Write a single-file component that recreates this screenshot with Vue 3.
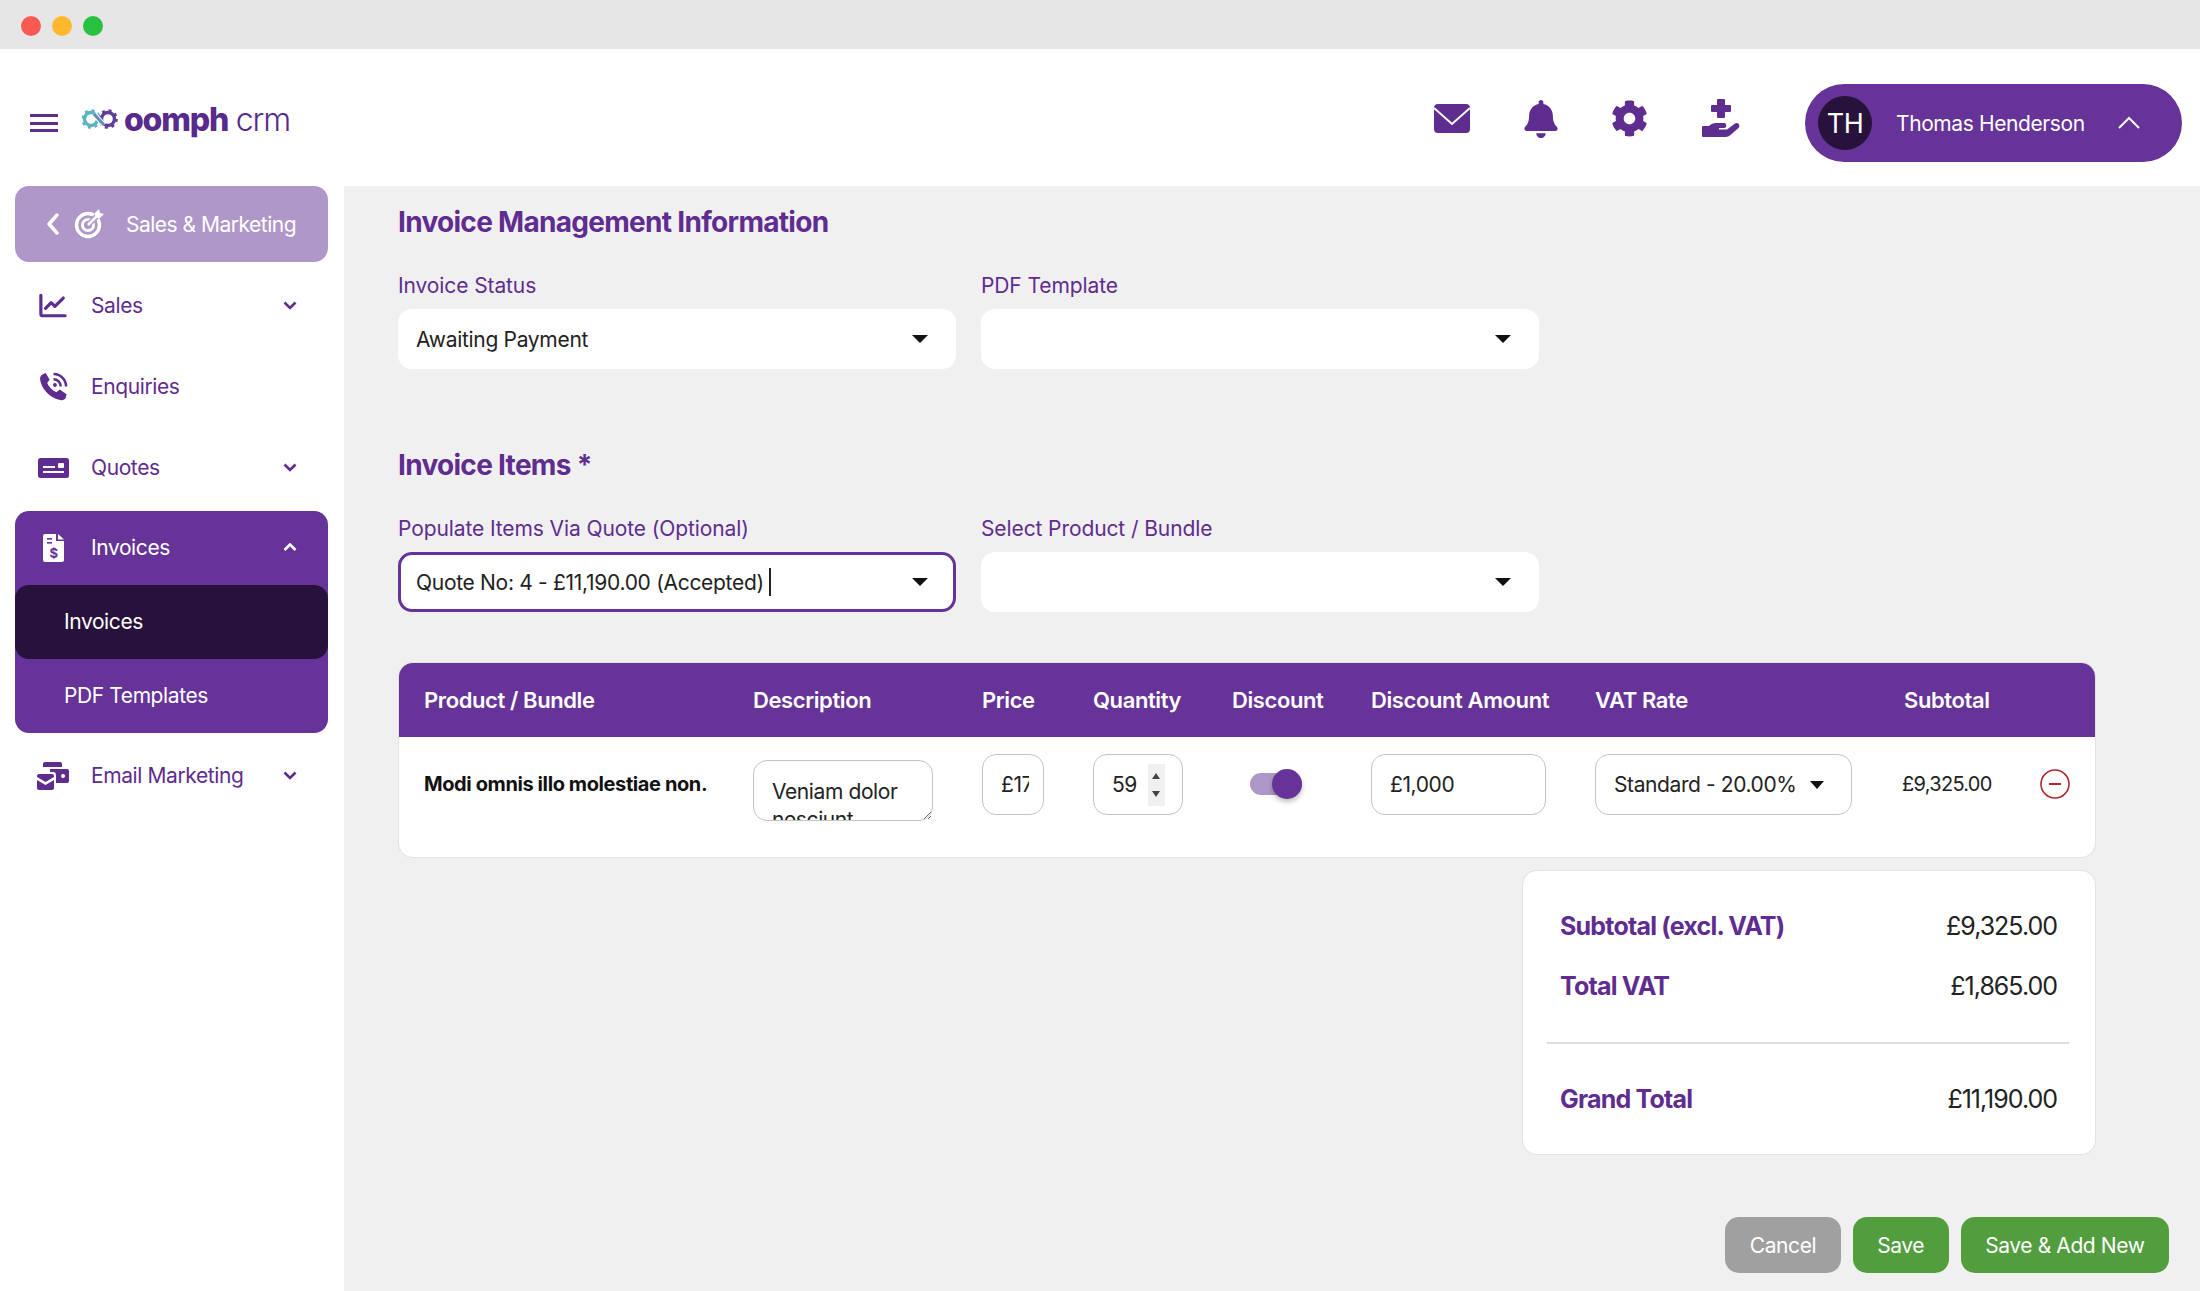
<template>
  <div class="window">
    <div class="titlebar">
      <span class="dot red"></span>
      <span class="dot yellow"></span>
      <span class="dot green"></span>
    </div>

    <header class="topbar">
      <div class="brand">
        <div class="burger"><i></i><i></i><i></i></div>
        <svg class="logo-mark" viewBox="0 0 36 22" width="36" height="22">
          <circle cx="9" cy="11" r="6.5" fill="none" stroke="#5bb4bf" stroke-width="3.4" />
          <circle cx="9" cy="11" r="8.6" fill="none" stroke="#5bb4bf" stroke-width="2.4" stroke-dasharray="3 3.8" />
          <circle cx="26" cy="11" r="6.5" fill="none" stroke="#5f3d9a" stroke-width="3.4" />
          <circle cx="26" cy="11" r="8.6" fill="none" stroke="#5f3d9a" stroke-width="2.4" stroke-dasharray="3 3.8" />
          <path d="M12 6 L22 17" stroke="#fff" stroke-width="5" />
          <path d="M12 6 L22 17" stroke="#5b8fb0" stroke-width="3" />
        </svg>
        <span class="logo-text"><b>oomph</b> <span>crm</span></span>
      </div>

      <div class="top-actions">
        <svg class="top-icon" viewBox="0 0 36 29" width="36" height="29">
          <rect x="0" y="0" width="36" height="29" rx="4" fill="#5f2c90" />
          <path d="M0 4 L18 20 L36 4" fill="none" stroke="#fff" stroke-width="2" />
        </svg>
        <svg class="top-icon" viewBox="0 0 448 512" width="34" height="38">
          <path fill="#5f2c90" d="M224 512c35.32 0 63.97-28.65 63.97-64H160.03c0 35.35 28.65 64 63.97 64zm215.39-149.71c-19.32-20.76-55.47-51.99-55.47-154.29 0-77.7-54.48-139.9-127.94-155.16V32c0-17.67-14.32-32-31.98-32s-31.98 14.33-31.98 32v20.84C118.56 68.1 64.08 130.3 64.08 208c0 102.3-36.15 133.53-55.47 154.29-6 6.45-8.66 14.16-8.61 21.71.11 16.4 12.98 32 32.1 32h383.8c19.12 0 32-15.6 32.1-32 .05-7.55-2.61-15.27-8.61-21.71z" />
        </svg>
        <svg class="top-icon" viewBox="0 0 512 512" width="37" height="37">
          <path fill="#5f2c90" d="M487.4 315.7l-42.6-24.6c4.3-23.2 4.3-47 0-70.2l42.6-24.6c4.9-2.8 7.1-8.6 5.5-14-11.1-35.6-30-67.8-54.7-94.6-3.8-4.1-10-5.1-14.8-2.3L380.8 110c-17.9-15.4-38.5-27.3-60.8-35.1V25.8c0-5.6-3.9-10.5-9.4-11.7-36.7-8.2-74.3-7.8-109.2 0-5.5 1.2-9.4 6.1-9.4 11.7V75c-22.2 7.9-42.8 19.8-60.8 35.1L88.7 85.5c-4.9-2.8-11-1.9-14.8 2.3-24.7 26.7-43.6 58.9-54.7 94.6-1.7 5.4.6 11.2 5.5 14L67.3 221c-4.3 23.2-4.3 47 0 70.2l-42.6 24.6c-4.9 2.8-7.1 8.6-5.5 14 11.1 35.6 30 67.8 54.7 94.6 3.8 4.1 10 5.1 14.8 2.3l42.6-24.6c17.9 15.4 38.5 27.3 60.8 35.1v49.2c0 5.6 3.9 10.5 9.4 11.7 36.7 8.2 74.3 7.8 109.2 0 5.5-1.2 9.4-6.1 9.4-11.7v-49.2c22.2-7.9 42.8-19.8 60.8-35.1l42.6 24.6c4.9 2.8 11 1.9 14.8-2.3 24.7-26.7 43.6-58.9 54.7-94.6 1.5-5.5-.7-11.3-5.6-14.1zM256 336c-44.1 0-80-35.9-80-80s35.9-80 80-80 80 35.9 80 80-35.9 80-80 80z" />
        </svg>
        <svg class="top-icon" viewBox="0 0 42 40" width="42" height="40">
          <path fill="#5f2c90" d="M16 0h6a1 1 0 0 1 1 1v5h5a1 1 0 0 1 1 1v5a1 1 0 0 1-1 1h-5v5a1 1 0 0 1-1 1h-6a1 1 0 0 1-1-1v-5h-5a1 1 0 0 1-1-1V7a1 1 0 0 1 1-1h5V1a1 1 0 0 1 1-1z" />
          <path fill="#5f2c90" d="M1 27h6c2-2 4-3 7-3h8c3 0 3 5 0 5h-5v1.5h8l8-6c3-2 6 2 3.500 4.500l-8 7c-1.500 1.300-3 2-5 2H1a1 1 0 0 1-1-1v-9a1 1 0 0 1 1-1z" />
        </svg>
      </div>

      <div class="profile">
        <span class="avatar">TH</span>
        <span class="profile-name">Thomas Henderson</span>
        <svg viewBox="0 0 24 14" width="24" height="14">
          <path d="M2 12 L12 2 L22 12" fill="none" stroke="#fff" stroke-width="2" />
        </svg>
      </div>
    </header>

    <div class="body">
      <aside class="sidebar">
        <div class="back">
          <svg viewBox="0 0 14 22" width="14" height="22">
            <path d="M11 2 L3 11 L11 20" fill="none" stroke="#fff" stroke-width="3.4" stroke-linecap="round" stroke-linejoin="round" />
          </svg>
          <svg class="target" viewBox="0 0 30 30" width="30" height="30">
            <circle cx="14" cy="16" r="11.500" fill="none" stroke="#fff" stroke-width="3.400" />
            <circle cx="14" cy="16" r="5.500" fill="none" stroke="#fff" stroke-width="3" />
            <path d="M14 16 L26 4" stroke="#b097c9" stroke-width="5.500" />
            <path d="M14 16 L25 5" stroke="#fff" stroke-width="2.600" />
            <path d="M21 4 L25 0 L26 4 L30 5 L26 9 L21 9z" fill="#fff" />
          </svg>
          <span>Sales &amp; Marketing</span>
        </div>

        <div class="nav-row">
          <span class="nav-icon">
            <svg viewBox="0 0 30 26" width="28" height="25">
              <path d="M2 2 V22 a2 2 0 0 0 2 2 H28" fill="none" stroke="#5f2c90" stroke-width="3.400" stroke-linecap="round" />
              <path d="M7 16 L13 10 L17 14 L26 5" fill="none" stroke="#5f2c90" stroke-width="3.400" stroke-linecap="round" stroke-linejoin="round" />
            </svg>
          </span>
          <span class="nav-label">Sales</span>
          <svg class="chev" viewBox="0 0 14 9" width="14" height="9"><path d="M1.500 1.500 L7 7 L12.500 1.500" /></svg>
        </div>

        <div class="nav-row">
          <span class="nav-icon">
            <svg viewBox="0 0 30 30" width="29" height="29">
              <path fill="#5f2c90" d="M7 1 L11 8 L8.500 11.500 C10 15.500 13.500 19 18 21 L21.500 18 L28.500 23 L27.500 27 C26.500 29 24.500 29.500 22 29 C11 27 2 17 1 7 C1 4.500 3 2 7 1z" />
              <path d="M15 7.500 A7.500 7.500 0 0 1 22.500 15 M15 2 A13 13 0 0 1 28 15" fill="none" stroke="#5f2c90" stroke-width="2.600" />
              <circle cx="16.500" cy="13.500" r="2" fill="#5f2c90" />
            </svg>
          </span>
          <span class="nav-label">Enquiries</span>
        </div>

        <div class="nav-row">
          <span class="nav-icon">
            <svg viewBox="0 0 31 20" width="31" height="20">
              <rect width="31" height="20" rx="2.500" fill="#5f2c90" />
              <rect x="5" y="8" width="12" height="2" fill="#fff" />
              <rect x="5" y="13" width="21" height="2" fill="#fff" />
              <rect x="20" y="5" width="6" height="5" rx="1" fill="#fff" />
            </svg>
          </span>
          <span class="nav-label">Quotes</span>
          <svg class="chev" viewBox="0 0 14 9" width="14" height="9"><path d="M1.500 1.500 L7 7 L12.500 1.500" /></svg>
        </div>

        <div class="nav-group">
          <div class="nav-row open">
            <span class="nav-icon">
              <svg viewBox="0 0 21 28" width="21" height="28">
                <path fill="#fff" d="M2 0 H13 V7 H21 V26 a2 2 0 0 1-2 2 H2 a2 2 0 0 1-2-2 V2 a2 2 0 0 1 2-2z M15 0 L21 5.500 H15z" />
                <rect x="4" y="4" width="5" height="1.600" fill="#663399" />
                <rect x="4" y="8" width="5" height="1.600" fill="#663399" />
                <text x="10.500" y="24" text-anchor="middle" font-size="13" font-weight="700" font-family="Inter, sans-serif" fill="#663399">$</text>
              </svg>
            </span>
            <span class="nav-label">Invoices</span>
            <svg class="chev" viewBox="0 0 14 9" width="14" height="9"><path d="M1.500 7 L7 1.500 L12.500 7" /></svg>
          </div>
          <div class="sub-row active">Invoices</div>
          <div class="sub-row">PDF Templates</div>
        </div>

        <div class="nav-row">
          <span class="nav-icon">
            <svg viewBox="0 0 32 28" width="32" height="28">
              <path fill="#5f2c90" d="M6 2 a2 2 0 0 1 2-2 H23 a2 2 0 0 1 2 2 V5 H6z" />
              <path fill="#5f2c90" d="M13 7 H30 a2 2 0 0 1 2 2 V19 a2 2 0 0 1-2 2 H19 V13 a3 3 0 0 0-3-3 H13z" />
              <circle cx="26" cy="14" r="2" fill="#fff" />
              <path fill="#5f2c90" d="M0 14 a2 2 0 0 1 2-2 H15 a2 2 0 0 1 2 2 V15 L8.500 20 L0 15z M0 18 L8.500 23 L17 18 V26 a2 2 0 0 1-2 2 H2 a2 2 0 0 1-2-2z" />
            </svg>
          </span>
          <span class="nav-label">Email Marketing</span>
          <svg class="chev" viewBox="0 0 14 9" width="14" height="9"><path d="M1.500 1.500 L7 7 L12.500 1.500" /></svg>
        </div>
      </aside>

      <main class="content">
        <h2 class="section-title first">Invoice Management Information</h2>
        <div class="field-row">
          <div class="field">
            <label>Invoice Status</label>
            <div class="select">Awaiting Payment<i class="caret"></i></div>
          </div>
          <div class="field">
            <label>PDF Template</label>
            <div class="select"><i class="caret"></i></div>
          </div>
        </div>

        <h2 class="section-title second">Invoice Items *</h2>
        <div class="field-row">
          <div class="field">
            <label>Populate Items Via Quote (Optional)</label>
            <div class="select focused">Quote No: 4 - £11,190.00 (Accepted)<span class="text-cursor"></span><i class="caret"></i></div>
          </div>
          <div class="field">
            <label>Select Product / Bundle</label>
            <div class="select"><i class="caret"></i></div>
          </div>
        </div>

        <section class="items">
          <div class="items-head">
            <span v-for="col in columns" :key="col">{{ col }}</span>
          </div>
          <div class="items-row">
            <strong class="product">Modi omnis illo molestiae non.</strong>
            <textarea class="box desc" readonly>Veniam dolor nesciunt</textarea>
            <input class="box price" readonly value="£175.00" />
            <div class="box qty">
              59
              <span class="spin"><i class="up"></i><i class="down"></i></span>
            </div>
            <span class="toggle"><i></i></span>
            <input class="box amount" readonly value="£1,000" />
            <div class="box vat">Standard - 20.00%<i class="caret small"></i></div>
            <span class="subtotal">£9,325.00</span>
            <svg class="remove" viewBox="0 0 30 30" width="30" height="30">
              <circle cx="15" cy="15" r="14" fill="none" stroke="#b3262e" stroke-width="1.600" />
              <path d="M9 15 H21" stroke="#b3262e" stroke-width="2.200" />
            </svg>
          </div>
        </section>

        <div class="totals-wrap">
          <section class="totals">
            <div class="total-line"><b>Subtotal (excl. VAT)</b><span>£9,325.00</span></div>
            <div class="total-line"><b>Total VAT</b><span>£1,865.00</span></div>
            <hr />
            <div class="total-line"><b>Grand Total</b><span>£11,190.00</span></div>
          </section>
        </div>

        <div class="actions">
          <button class="btn grey">Cancel</button>
          <button class="btn">Save</button>
          <button class="btn">Save &amp; Add New</button>
        </div>
      </main>
    </div>
  </div>
</template>

<script setup>
const columns = ['Product / Bundle', 'Description', 'Price', 'Quantity', 'Discount', 'Discount Amount', 'VAT Rate', 'Subtotal']
</script>

<style>
html, body { margin: 0; background: #fff; }
</style>

<style scoped>
.window {
  width: 2200px;
  height: 1291px;
  overflow: hidden;
  display: flex;
  flex-direction: column;
  font-family: Inter, "Liberation Sans", sans-serif;
  letter-spacing: -0.4px;
  color: #222;
}

.titlebar {
  height: 49px;
  flex: none;
  background: #e6e6e6;
  display: flex;
  align-items: center;
  gap: 11px;
  padding: 3px 0 0 21px;
  box-sizing: border-box;
}
.dot { width: 20px; height: 20px; border-radius: 50%; }
.red { background: #fb5a52; }
.yellow { background: #fdb82e; }
.green { background: #27c13f; }

.topbar {
  height: 137px;
  flex: none;
  display: flex;
  align-items: center;
  background: #fff;
}
.brand { display: flex; align-items: center; width: 1400px; padding-left: 30px; box-sizing: border-box; margin-top: 10px; }
.burger { width: 28px; margin-right: 24px; margin-top: 6px; }
.burger i { display: block; height: 3px; background: #5f2c90; margin-bottom: 4.500px; }
.logo-mark { margin: -7px 6px 0 0; }
.logo-text { font-size: 32px; color: #572a8c; letter-spacing: -1.2px; margin-top: -7px; }
.logo-text b { font-weight: 800; }
.logo-text span { font-weight: 300; }

.top-actions { display: flex; align-items: center; width: 405px; padding-left: 34px; box-sizing: border-box; gap: 53.500px; margin-top: 2px; }
.profile {
  width: 377px;
  height: 78px;
  margin-top: 11px;
  border-radius: 39px;
  background: #663399;
  color: #fff;
  display: flex;
  align-items: center;
  box-sizing: border-box;
  padding-left: 13px;
}
.avatar {
  width: 54px;
  height: 54px;
  border-radius: 50%;
  background: #26123a;
  font-size: 27px;
  display: flex;
  align-items: center;
  justify-content: center;
  margin-right: 24px;
}
.profile-name { font-size: 21px; width: 221px; }

.body { flex: 1; display: flex; min-height: 0; }

.sidebar { width: 344px; flex: none; padding: 0 16px 0 15px; box-sizing: border-box; background: #fff; }
.back {
  height: 76px;
  border-radius: 14px;
  background: #b097c9;
  color: #fff;
  display: flex;
  align-items: center;
  padding-left: 31px;
  font-size: 21px;
  letter-spacing: -0.5px;
  margin-bottom: 3px;
}
.back .target { margin: 0 22px 0 14px; }
.nav-row {
  height: 81px;
  display: flex;
  align-items: center;
  color: #5f2c90;
  font-size: 21px;
  position: relative;
}
.nav-icon { width: 76px; display: flex; justify-content: center; flex: none; }
.chev { position: absolute; left: 268px; fill: none; stroke: #5f2c90; stroke-width: 2.600; }
.nav-group { margin: 2.500px 0; background: #663399; border-radius: 14px; overflow: hidden; }
.nav-row.open { height: 74px; color: #fff; }
.nav-row.open .chev { stroke: #fff; }
.sub-row { height: 74px; display: flex; align-items: center; padding-left: 49px; color: #fff; font-size: 21px; }
.sub-row.active { background: #26123a; border-radius: 14px; }

.content { flex: 1; background: #f0f0f0; padding-left: 54px; box-sizing: border-box; }
.section-title { margin: 0; font-size: 28px; line-height: 36px; font-weight: 700; color: #5f2c90; letter-spacing: -0.7px; }
.section-title.first { margin-top: 18px; }
.section-title.second { margin-top: 78px; }
.field-row { display: flex; gap: 25px; margin-top: 33px; }
.field { width: 558px; }
.field label { display: block; color: #5f2c90; font-size: 21px; line-height: 26px; margin-bottom: 10px; letter-spacing: -0.1px; }
.select {
  height: 60px;
  background: #fff;
  border-radius: 14px;
  box-sizing: border-box;
  display: flex;
  align-items: center;
  padding: 0 28px 0 18px;
  font-size: 21px;
  letter-spacing: -0.3px;
  color: #222;
  position: relative;
}
.select.focused { border: 3px solid #663399; padding: 0 25px 0 15px; }
.text-cursor { display: inline-block; width: 2px; height: 28px; background: #222; margin-left: 5px; }
.caret {
  margin-left: auto;
  width: 0;
  height: 0;
  border-left: 8px solid transparent;
  border-right: 8px solid transparent;
  border-top: 8px solid #111;
}

.items {
  width: 1696px;
  margin: 51px 0 0 1px;
  height: 194px;
  background: #fff;
  border-radius: 14px;
  box-shadow: 0 0 0 1px #e2e2e2;
  overflow: hidden;
}
.items-head, .items-row {
  display: grid;
  grid-template-columns: 329px 229px 111px 139px 139px 224px 309px 136px 1fr;
  padding-left: 25px;
}
.items-head {
  height: 74px;
  align-items: center;
  background: #663399;
  color: #fff;
  font-size: 22px;
  font-weight: 600;
  letter-spacing: -0.4px;
}
.items-row { padding-top: 17px; align-items: start; color: #222; }
.product { color: #111; font-size: 20px; font-weight: 700; line-height: 61px; }
.box {
  height: 61px;
  border: 1.500px solid #c4c4c4;
  border-radius: 14px;
  box-sizing: border-box;
  background: #fff;
  font-family: inherit;
  font-size: 21px;
  letter-spacing: -0.4px;
  color: #222;
  outline: none;
  padding: 0 18px;
  display: flex;
  align-items: center;
}
.desc { width: 180px; margin-top: 6px; padding: 17px 18px 0; line-height: 28px; overflow: hidden; display: block; resize: both; }
.price { width: 62px; padding-right: 14px; }
.qty { width: 90px; position: relative; }
.spin { position: absolute; right: 17px; top: 9px; width: 17px; height: 42px; background: #f0f0f0; }
.spin i { position: absolute; left: 4px; width: 0; height: 0; border-left: 4.500px solid transparent; border-right: 4.500px solid transparent; }
.spin .up { top: 9px; border-bottom: 6px solid #444; }
.spin .down { bottom: 9px; border-top: 6px solid #444; }
.toggle { position: relative; width: 52px; height: 22px; background: #b097c9; border-radius: 11px; margin: 19px 0 0 18px; display: block; }
.toggle i { position: absolute; right: 0; top: -4px; width: 30px; height: 30px; border-radius: 50%; background: #663399; box-shadow: 0 3px 5px rgba(0, 0, 0, .25); }
.amount { width: 175px; }
.vat { width: 257px; position: relative; }
.caret.small { margin-left: 13px; border-left-width: 7.500px; border-right-width: 7.500px; }
.subtotal { font-size: 20px; line-height: 61px; letter-spacing: -0.7px; margin-left: -2px; }
.remove { margin-top: 15px; }

.totals-wrap { display: flex; justify-content: flex-end; width: 1697px; margin-top: 14px; }
.totals {
  width: 572px;
  height: 283px;
  box-sizing: border-box;
  background: #fff;
  border-radius: 14px;
  box-shadow: 0 0 0 1px #e2e2e2;
  padding: 25px 26px 0 24px;
}
.total-line { display: flex; justify-content: space-between; align-items: center; height: 60px; padding: 0 12px 0 13px; font-size: 25px; }
.total-line b { color: #5f2c90; font-weight: 700; letter-spacing: -0.8px; }
.total-line span { letter-spacing: -1px; color: #222; }
.totals hr { border: 0; border-top: 2px solid #dedede; margin: 26px 0 25px; }

.actions { display: flex; justify-content: flex-end; gap: 12px; width: 1771px; margin-top: 63px; }
.btn {
  height: 56px;
  border: 0;
  border-radius: 14px;
  background: #529e3f;
  color: #fff;
  font-family: inherit;
  font-size: 21px;
  letter-spacing: -0.4px;
  padding: 0 24.500px;
}
.btn.grey { background: #a0a0a0; }
</style>
